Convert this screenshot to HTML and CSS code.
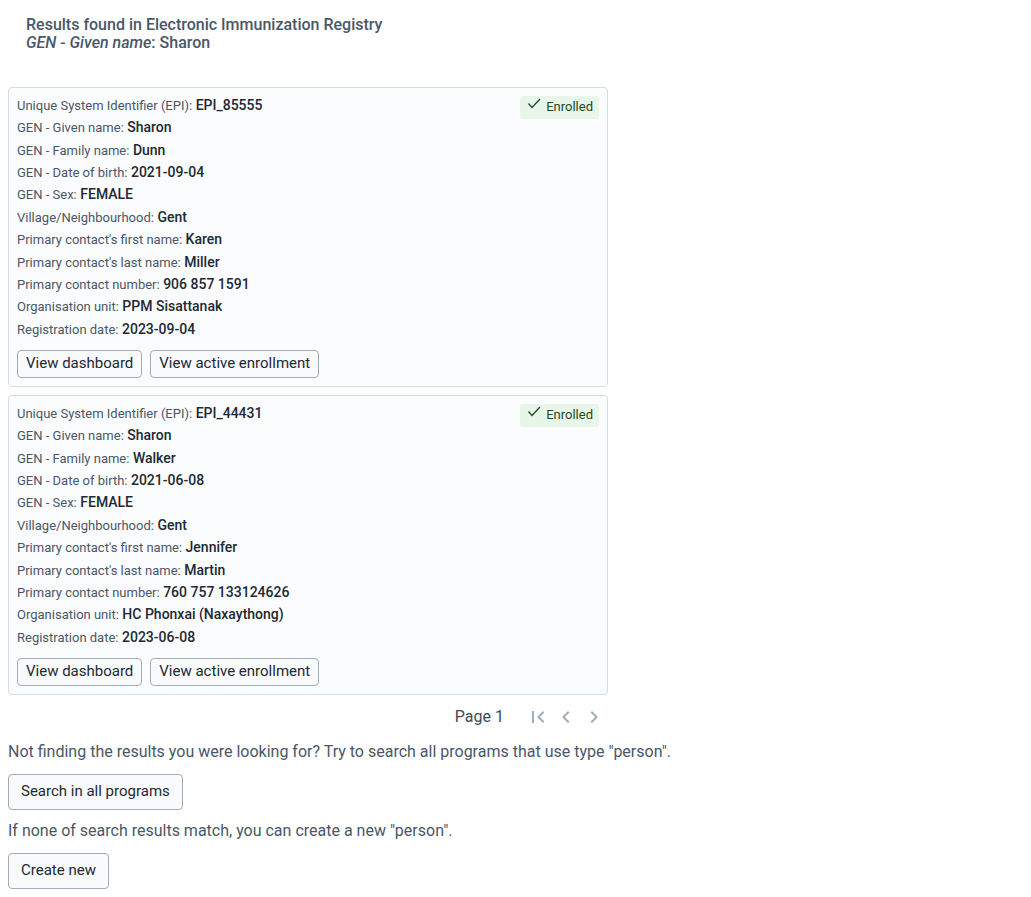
FILE: index.html
```html
<!DOCTYPE html>
<html lang="en">
<head>
<meta charset="utf-8">
<meta name="viewport" content="width=device-width, initial-scale=1">
<title>Search results</title>
<link rel="stylesheet" href="styles.css">
</head>
<body>
<main class="results">
  <h1 class="results-title">Results found in Electronic Immunization Registry<br><em>GEN - Given name</em>: Sharon</h1>
  <div class="card-list">
    <article class="card">
      <dl class="fields">
        <div class="field"><dt>Unique System Identifier (EPI):</dt> <dd>EPI_85555</dd></div>
        <div class="field"><dt>GEN - Given name:</dt> <dd>Sharon</dd></div>
        <div class="field"><dt>GEN - Family name:</dt> <dd>Dunn</dd></div>
        <div class="field"><dt>GEN - Date of birth:</dt> <dd>2021-09-04</dd></div>
        <div class="field"><dt>GEN - Sex:</dt> <dd>FEMALE</dd></div>
        <div class="field"><dt>Village/Neighbourhood:</dt> <dd>Gent</dd></div>
        <div class="field"><dt>Primary contact's first name:</dt> <dd>Karen</dd></div>
        <div class="field"><dt>Primary contact's last name:</dt> <dd>Miller</dd></div>
        <div class="field"><dt>Primary contact number:</dt> <dd>906 857 1591</dd></div>
        <div class="field"><dt>Organisation unit:</dt> <dd>PPM Sisattanak</dd></div>
        <div class="field"><dt>Registration date:</dt> <dd>2023-09-04</dd></div>
      </dl>
      <span class="badge"><svg class="check" viewBox="0 0 14 14" aria-hidden="true"><path d="M1.500 6.500 5 10.500 13 2"/></svg>Enrolled</span>
      <div class="actions">
        <button type="button" class="button button-small">View dashboard</button>
        <button type="button" class="button button-small">View active enrollment</button>
      </div>
    </article>
    <article class="card">
      <dl class="fields">
        <div class="field"><dt>Unique System Identifier (EPI):</dt> <dd>EPI_44431</dd></div>
        <div class="field"><dt>GEN - Given name:</dt> <dd>Sharon</dd></div>
        <div class="field"><dt>GEN - Family name:</dt> <dd>Walker</dd></div>
        <div class="field"><dt>GEN - Date of birth:</dt> <dd>2021-06-08</dd></div>
        <div class="field"><dt>GEN - Sex:</dt> <dd>FEMALE</dd></div>
        <div class="field"><dt>Village/Neighbourhood:</dt> <dd>Gent</dd></div>
        <div class="field"><dt>Primary contact's first name:</dt> <dd>Jennifer</dd></div>
        <div class="field"><dt>Primary contact's last name:</dt> <dd>Martin</dd></div>
        <div class="field"><dt>Primary contact number:</dt> <dd>760 757 133124626</dd></div>
        <div class="field"><dt>Organisation unit:</dt> <dd>HC Phonxai (Naxaythong)</dd></div>
        <div class="field"><dt>Registration date:</dt> <dd>2023-06-08</dd></div>
      </dl>
      <span class="badge"><svg class="check" viewBox="0 0 14 14" aria-hidden="true"><path d="M1.500 6.500 5 10.500 13 2"/></svg>Enrolled</span>
      <div class="actions">
        <button type="button" class="button button-small">View dashboard</button>
        <button type="button" class="button button-small">View active enrollment</button>
      </div>
    </article>
    <nav class="pagination" aria-label="Pagination">
      <span class="page-label">Page 1</span>
      <button type="button" class="page-button" aria-label="First page" disabled><svg viewBox="0 0 24 24" aria-hidden="true"><path d="M18.410 16.590 13.820 12l4.590-4.590L17 6l-6 6 6 6zM6 6h2v12H6z"/></svg></button>
      <button type="button" class="page-button" aria-label="Previous page" disabled><svg viewBox="0 0 24 24" aria-hidden="true"><path d="M15.410 7.410 14 6l-6 6 6 6 1.410-1.410L10.830 12z"/></svg></button>
      <button type="button" class="page-button" aria-label="Next page" disabled><svg viewBox="0 0 24 24" aria-hidden="true"><path d="M10 6 8.590 7.410 13.170 12l-4.580 4.590L10 18l6-6z"/></svg></button>
    </nav>
  </div>
  <section class="fallback">
    <p>Not finding the results you were looking for? Try to search all programs that use type "person".</p>
    <button type="button" class="button">Search in all programs</button>
    <p>If none of search results match, you can create a new "person".</p>
    <button type="button" class="button">Create new</button>
  </section>
</main>
</body>
</html>
```
FILE: styles.css
```css
* {
  box-sizing: border-box;
}

body {
  margin: 0;
  background: #fff;
  color: #4a5768;
  font-family: Roboto, "Liberation Sans", sans-serif;
  font-size: 16px;
}

.results {
  padding: 16px 8px 8px;
}

.results-title {
  margin: 0 18px 35px;
  font-size: 16px;
  font-weight: 500;
  line-height: 18px;
}

.card-list {
  display: flex;
  flex-direction: column;
  gap: 8px;
  max-width: 600px;
}

.card {
  display: grid;
  grid-template-columns: 1fr auto;
  gap: 8px;
  padding: 8px;
  border: 1px solid #d5dde5;
  border-radius: 4px;
  background: #fbfcfd;
}

.fields {
  display: grid;
  grid-auto-rows: 1fr;
  align-items: start;
  min-height: 246px;
  margin: 0;
}

.field {
  font-size: 14px;
  line-height: 18px;
}

.field dt,
.field dd {
  display: inline;
  margin: 0;
}

.field dt {
  color: #4a5768;
  font-size: 13px;
}

.field dd {
  color: #212934;
  font-weight: 500;
}

.badge {
  display: flex;
  align-self: start;
  gap: 5px;
  padding: 1px 6px 3px 7px;
  border-radius: 3px;
  background: #e8f5e9;
  color: #1b4d20;
  font-size: 13px;
  line-height: 19px;
}

.check {
  width: 14px;
  height: 14px;
  fill: none;
  stroke: currentColor;
  stroke-width: 1.3;
}

.actions {
  display: flex;
  flex-wrap: wrap;
  grid-column: 1 / -1;
  gap: 8px;
}

.button {
  padding: 7px 12px 9px;
  border: 1px solid #a0adba;
  border-radius: 4px;
  background: #f9fafb;
  color: #212934;
  font-family: inherit;
  font-size: 15px;
  line-height: 18px;
  cursor: pointer;
}

.button-small {
  padding: 3px 8px 5px;
}

.pagination {
  display: flex;
  align-items: center;
  justify-content: flex-end;
  gap: 4px;
  padding-right: 2px;
}

.page-label {
  margin-right: 18px;
  color: #404b5a;
  line-height: 28px;
}

.page-button {
  width: 24px;
  height: 24px;
  padding: 0;
  border: 0;
  background: none;
}

.page-button svg {
  display: block;
  fill: #a0adba;
}

.fallback {
  display: flex;
  flex-direction: column;
  align-items: flex-start;
}

.fallback p {
  margin: 11px 0 12px;
  line-height: 20px;
}
```
